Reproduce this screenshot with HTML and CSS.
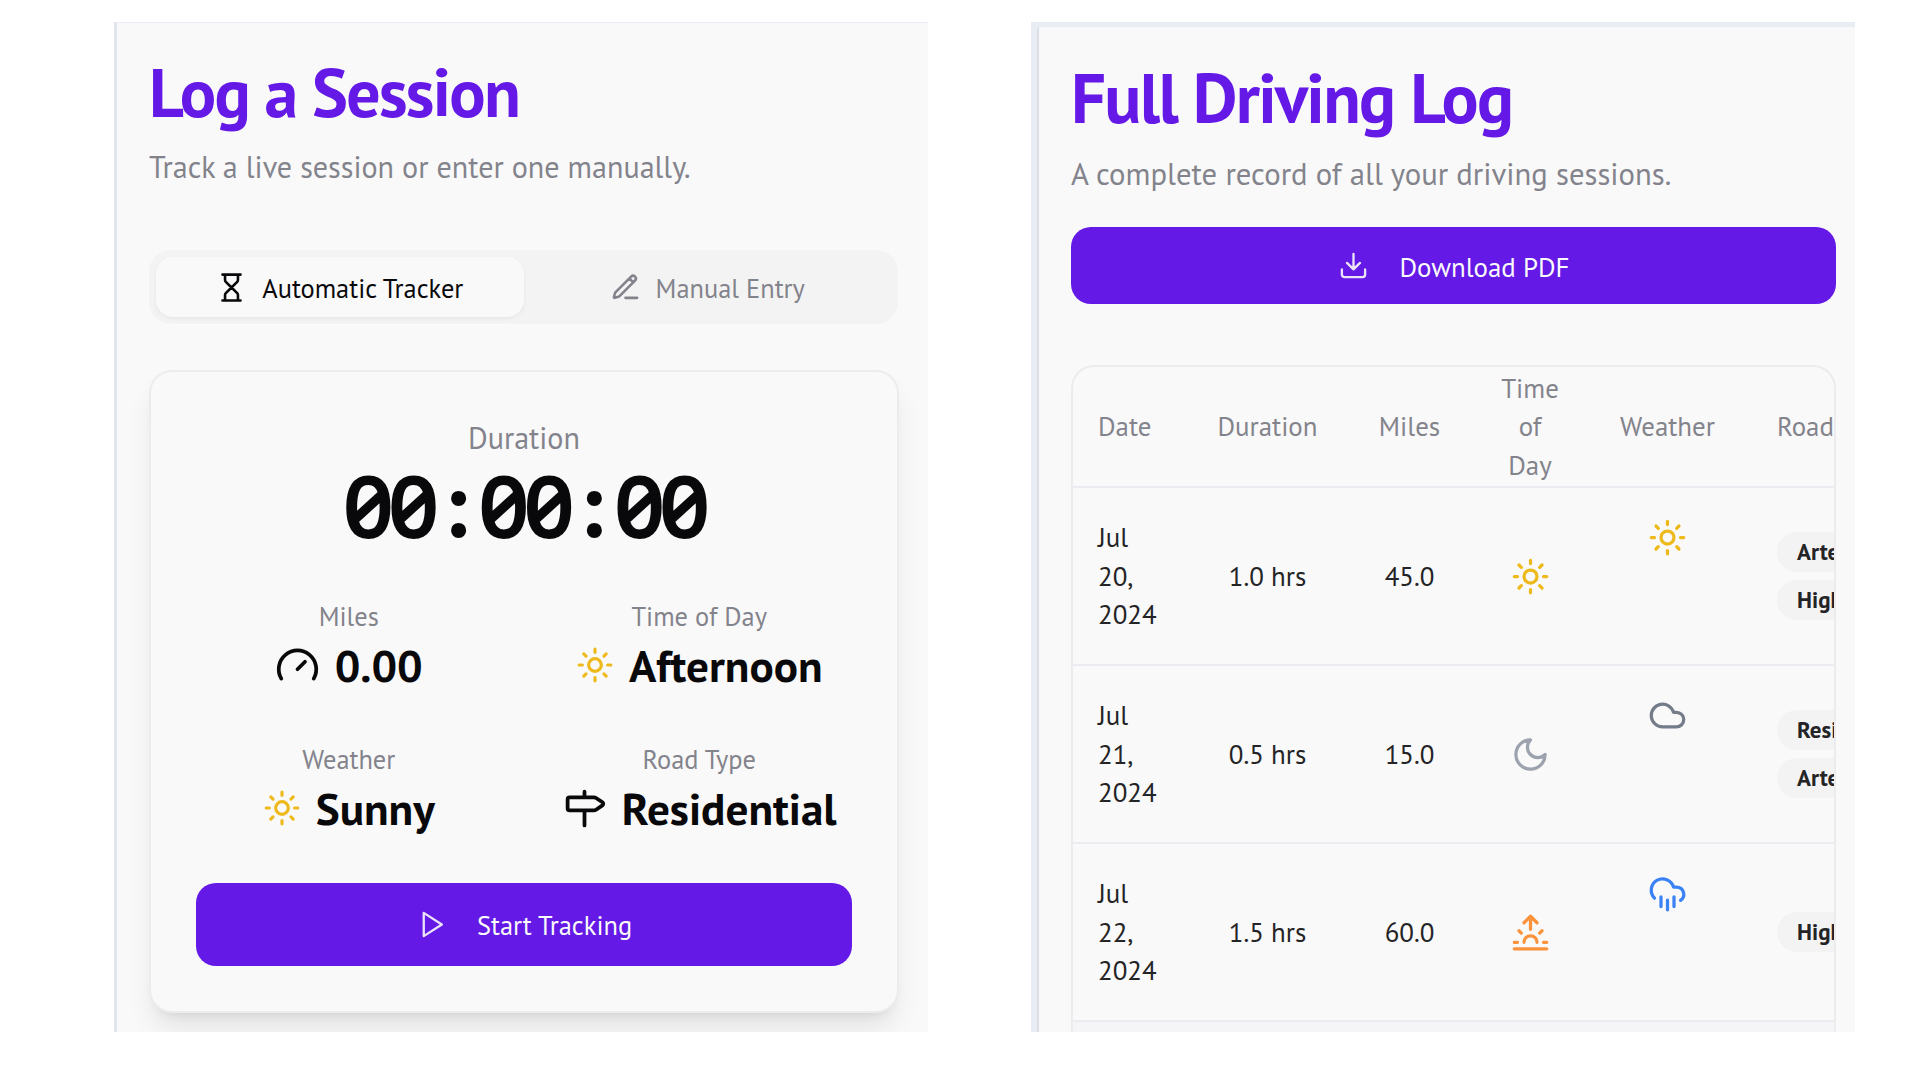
FILE: index.html
```html
<!DOCTYPE html>
<html lang="en">
<head>
<meta charset="utf-8">
<title>Driving Log</title>
<link rel="stylesheet" href="styles.css">
</head>
<body>
<svg class="sprite" aria-hidden="true">
  <symbol id="sun" viewBox="0 0 24 24"><circle cx="12" cy="12" r="4"/><path d="M12 2v2M12 20v2M4.93 4.93l1.41 1.41M17.66 17.66l1.41 1.41M2 12h2M20 12h2M6.34 17.66l-1.41 1.41M19.07 4.93l-1.41 1.41"/></symbol>
  <symbol id="hourglass" viewBox="0 0 24 24"><path d="M5 22h14M5 2h14M17 22v-4.172a2 2 0 0 0-.586-1.414L12 12l-4.414 4.414A2 2 0 0 0 7 17.828V22M7 2v4.172a2 2 0 0 0 .586 1.414L12 12l4.414-4.414A2 2 0 0 0 17 6.172V2"/></symbol>
  <symbol id="pencil" viewBox="0 0 24 24"><path d="M12 20h9M16.376 3.622a1 1 0 0 1 3.002 3.002L7.368 18.635a2 2 0 0 1-.855.506l-2.872.838a.5.5 0 0 1-.62-.62l.838-2.872a2 2 0 0 1 .506-.854zM15 5l3 3"/></symbol>
  <symbol id="gauge" viewBox="0 0 24 24"><path d="M12 14l4-4M3.34 19a10 10 0 1 1 17.32 0"/></symbol>
  <symbol id="signpost" viewBox="0 0 24 24"><path d="M12 13v8M12 3v3M4 6a1 1 0 0 0-1 1v5a1 1 0 0 0 1 1h13a2 2 0 0 0 1.152-.365l3.424-2.317a1 1 0 0 0 0-1.635l-3.424-2.318A2 2 0 0 0 17 6z"/></symbol>
  <symbol id="play" viewBox="0 0 24 24"><path d="M6 3l14 9-14 9z"/></symbol>
  <symbol id="download" viewBox="0 0 24 24"><path d="M21 15v4a2 2 0 0 1-2 2H5a2 2 0 0 1-2-2v-4M7 10l5 5 5-5M12 15V3"/></symbol>
  <symbol id="moon" viewBox="0 0 24 24"><path d="M12 3a6 6 0 0 0 9 9 9 9 0 1 1-9-9Z"/></symbol>
  <symbol id="cloud" viewBox="0 0 24 24"><path d="M17.5 19H9a7 7 0 1 1 6.71-9h1.79a4.5 4.5 0 1 1 0 9Z"/></symbol>
  <symbol id="rain" viewBox="0 0 24 24"><path d="M4 14.899A7 7 0 1 1 15.71 8h1.79a4.5 4.5 0 0 1 2.5 8.242M16 14v6M8 14v6M12 16v6"/></symbol>
  <symbol id="sunrise" viewBox="0 0 24 24"><path d="M12 2v8M4.93 10.93l1.41 1.41M2 18h2M20 18h2M19.07 10.93l-1.41 1.41M22 22H2M8 6l4-4 4 4M16 18a4 4 0 0 0-8 0"/></symbol>
</svg>
<main class="screens">
  <section class="panel session">
    <h1>Log a Session</h1>
    <p class="lead">Track a live session or enter one manually.</p>
    <div class="tabs">
      <button class="tab active"><svg class="icon"><use href="#hourglass"/></svg><span>Automatic Tracker</span></button>
      <button class="tab"><svg class="icon"><use href="#pencil"/></svg><span>Manual Entry</span></button>
    </div>
    <div class="card">
      <div class="duration-label">Duration</div>
      <div class="timer">00:00:00</div>
      <div class="stats">
        <div class="stat"><div class="label">Miles</div><div class="value"><svg class="icon large"><use href="#gauge"/></svg><span>0.00</span></div></div>
        <div class="stat"><div class="label">Time of Day</div><div class="value"><svg class="icon medium yellow"><use href="#sun"/></svg><span>Afternoon</span></div></div>
        <div class="stat"><div class="label">Weather</div><div class="value"><svg class="icon medium yellow"><use href="#sun"/></svg><span>Sunny</span></div></div>
        <div class="stat"><div class="label">Road Type</div><div class="value"><svg class="icon large"><use href="#signpost"/></svg><span>Residential</span></div></div>
      </div>
      <button class="primary start"><svg class="icon"><use href="#play"/></svg><span>Start Tracking</span></button>
    </div>
  </section>
  <section class="panel log">
    <div class="log-page">
      <h1>Full Driving Log</h1>
      <p class="lead">A complete record of all your driving sessions.</p>
      <button class="primary download"><svg class="icon"><use href="#download"/></svg><span>Download PDF</span></button>
      <div class="table-wrap">
        <table>
          <colgroup><col class="c-date"><col class="c-duration"><col class="c-miles"><col class="c-time"><col class="c-weather"><col class="c-road"></colgroup>
          <thead><tr><th class="date">Date</th><th>Duration</th><th>Miles</th><th>Time<br>of<br>Day</th><th>Weather</th><th class="road">Road Types</th></tr></thead>
          <tbody>
            <tr><td class="date">Jul<br>20,<br>2024</td><td>1.0 hrs</td><td>45.0</td><td><svg class="icon cell yellow"><use href="#sun"/></svg></td><td class="weather"><svg class="icon cell yellow"><use href="#sun"/></svg></td><td class="road"><div class="badges"><span class="badge">Arterial</span><span class="badge">Highway</span></div></td></tr>
            <tr><td class="date">Jul<br>21,<br>2024</td><td>0.5 hrs</td><td>15.0</td><td><svg class="icon cell gray"><use href="#moon"/></svg></td><td class="weather"><svg class="icon cell slate"><use href="#cloud"/></svg></td><td class="road"><div class="badges"><span class="badge">Residential</span><span class="badge">Arterial</span></div></td></tr>
            <tr><td class="date">Jul<br>22,<br>2024</td><td>1.5 hrs</td><td>60.0</td><td><svg class="icon cell orange"><use href="#sunrise"/></svg></td><td class="weather"><svg class="icon cell blue"><use href="#rain"/></svg></td><td class="road"><div class="badges"><span class="badge">Highway</span></div></td></tr>
            <tr class="total"><td colspan="6"></td></tr>
          </tbody>
        </table>
      </div>
    </div>
  </section>
</main>
</body>
</html>
```
FILE: styles.css
```css
* { box-sizing: border-box; }
body { margin: 0; background: #fff; color: #09090b; font-family: "PT Sans", Lato, "Open Sans", sans-serif; overflow: hidden; }
.sprite { display: none; }
.screens { display: flex; justify-content: space-between; width: 1855px; height: 1032px; padding: 22px 0 0 114px; }
.panel { height: 1010px; overflow: hidden; background: #f9f9f9; }
.session { width: 814px; padding: 31px 29px 0 32px; border-left: 3px solid #e0e4ec; border-top: 1px solid #e8edf6; }
.log { width: 824px; padding: 5px 0 0 6px; background: #e8edf4; }
.log-page { height: 1005px; padding: 33px 19px 0 32px; border-left: 2px solid #dcdfe5; background: #f9f9f9; border-top-left-radius: 3px; }
h1 { margin: 0; font-size: 67.8px; line-height: 76px; font-weight: 700; letter-spacing: -1.7px; color: #6419e6; white-space: nowrap; }
.log h1 { font-size: 69.1px; letter-spacing: -1.73px; }
.lead { margin: 14px 0 0; font-size: 30.1px; line-height: 45px; color: #83838c; white-space: nowrap; }
.log .lead { font-size: 30.7px; margin-top: 15px; }

button { border: 0; font: inherit; display: flex; align-items: center; justify-content: center; }
.icon { width: 31px; height: 31px; flex: none; display: block; fill: none; stroke: currentColor; stroke-width: 2; stroke-linecap: round; stroke-linejoin: round; }
.tabs { display: flex; width: 749px; height: 74px; margin-top: 61px; padding: 7px; border-radius: 22px; background: #f3f3f3; }
.tab { flex: 1; gap: 15px; border-radius: 17px; background: none; color: #83838c; font-size: 26.4px; white-space: nowrap; }
.tab span, .primary span { padding-top: 1px; }
.tab.active { background: #f9f9f9; color: #09090b; box-shadow: 0 2px 4px rgba(0, 0, 0, .05); }

.card { width: 750px; height: 643px; margin-top: 46px; padding: 44px 45px 0; border: 2px solid #ececee; border-radius: 23px; background: #f9f9f9; text-align: center; box-shadow: 0 19px 29px -6px rgba(0, 0, 0, .1), 0 8px 11px -8px rgba(0, 0, 0, .1); }
.duration-label { font-size: 30.1px; line-height: 44px; color: #83838c; }
.timer { padding: 2px 0 0 1px; height: 92px; font-family: "PT Mono", "Noto Sans Mono", monospace; font-size: 82px; line-height: 92px; font-weight: 700; letter-spacing: -4px; -webkit-text-stroke: 1.5px currentColor; }
.stats { display: grid; grid-template-columns: 1fr 1fr; gap: 45px; margin-top: 43px; }
.label { padding-top: 1px; height: 40px; font-size: 26.4px; line-height: 40px; color: #83838c; }
.value { display: flex; align-items: center; justify-content: center; gap: 15px; margin-top: 2px; height: 56px; font-size: 45.2px; line-height: 56px; font-weight: 700; white-space: nowrap; }
.icon.large { width: 45px; height: 45px; }
.icon.medium { width: 38px; height: 38px; }
.primary { width: 100%; gap: 30px; border-radius: 20px; background: #6419e6; color: #fafafa; font-size: 26.4px; }
.start { height: 83px; margin-top: 47px; }
.primary .icon { stroke-width: 1.8; opacity: .9; }
.download { height: 77px; margin-top: 31px; font-size: 26.9px; gap: 31px; }
.download span { padding-top: 2px; }

.table-wrap { width: 765px; height: 680px; margin: 61px 0 0; border: 2px solid #ececef; border-radius: 23px 23px 0 0; overflow: hidden; }
table { width: 971px; table-layout: fixed; border-collapse: separate; border-spacing: 0; font-size: 26.9px; line-height: 38.5px; }
.c-date { width: 114px; }
.c-duration { width: 161px; }
.c-miles { width: 123px; }
.c-time { width: 118px; }
.c-weather { width: 157px; }
.c-road { width: 298px; }
th, td { padding: 0; border-bottom: 2px solid #ececf0; text-align: center; white-space: nowrap; }
th { height: 121px; font-weight: 400; color: #83838c; }
td { height: 178px; color: #242426; }
.date { padding-left: 25px; text-align: left; }
.road { padding-left: 31px; text-align: left; }
td.weather { vertical-align: top; padding-top: 30px; }
.total td { background: #f5f5f7; }
.icon.cell { width: 39px; height: 39px; margin: 0 auto; }
.badges { display: flex; flex-direction: column; align-items: flex-start; gap: 8px; }
.badge { height: 40px; padding: 0 20px; border-radius: 21px; background: #f3f3f4; font-size: 23px; line-height: 39px; font-weight: 700; }
.yellow { color: #eeb91a; }
.gray { color: #9ca3af; }
.slate { color: #747b89; }
.orange { color: #fb923c; }
.blue { color: #3b82f6; }
```
